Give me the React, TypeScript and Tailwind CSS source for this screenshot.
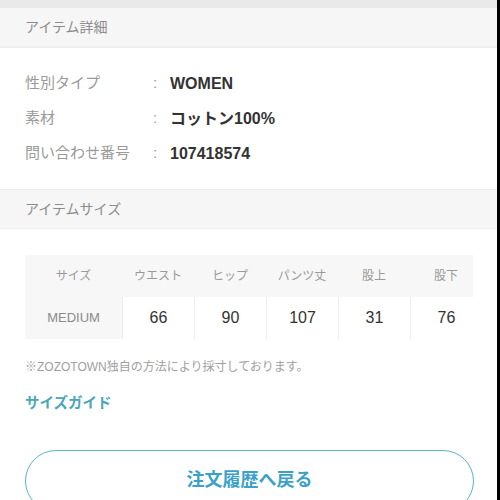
const font = {
  fontFamily: '"Liberation Sans", "Noto Sans CJK JP", sans-serif',
};

export default function App() {
  const details = [
    { label: "性別タイプ", value: "WOMEN" },
    { label: "素材", value: "コットン100%" },
    { label: "問い合わせ番号", value: "107418574" },
  ];

  const columns = ["ウエスト", "ヒップ", "パンツ丈", "股上", "股下"];
  const values = ["66", "90", "107", "31", "76"];

  return (
    <div className="flex h-[500px] w-[500px] overflow-hidden bg-white" style={font}>
      <div className="w-[497px]">
        <div className="h-[8px] bg-[#e9e9e9]" />

        <div className="flex h-[40px] items-center border-b-2 border-[#eeeeee] bg-[#f6f6f6] px-[25px]">
          <p className="text-[14px] text-[#8c8c8c]">アイテム詳細</p>
        </div>

        <div className="pb-[18px] pt-[18px]">
          {details.map((row) => (
            <div key={row.label} className="flex h-[35px] items-center px-[25px]">
              <span className="w-[128px] text-[15px] text-[#9a9a9a]">{row.label}</span>
              <span className="w-[17px] text-[15px] text-[#9a9a9a]">:</span>
              <span className="text-[16px] font-bold text-[#333333]">{row.value}</span>
            </div>
          ))}
        </div>

        <div className="flex h-[40px] items-center border-y border-[#eeeeee] bg-[#f6f6f6] px-[25px]">
          <p className="text-[14px] text-[#8c8c8c]">アイテムサイズ</p>
        </div>

        <div className="px-[25px] pt-[26px]">
          <div className="w-[448px] overflow-hidden bg-[#f7f7f7]">
            <div className="flex w-max">
              <div className="flex w-[97px] flex-col">
                <div className="flex h-[42px] items-center justify-center text-[12px] text-[#9a9a9a]">
                  サイズ
                </div>
                <div className="flex h-[42px] items-center justify-center text-[13px] text-[#8a8a8a]">
                  MEDIUM
                </div>
              </div>
              {columns.map((col, i) => (
                <div key={col} className="flex w-[72px] flex-col">
                  <div className="flex h-[42px] items-center justify-center text-[12px] text-[#9a9a9a]">
                    {col}
                  </div>
                  <div className="flex h-[42px] items-center justify-center border-l border-[#eeeeee] bg-white text-[16px] text-[#333333]">
                    {values[i]}
                  </div>
                </div>
              ))}
            </div>
          </div>

          <p className="mt-[19px] text-[12px] text-[#a0a0a0]">
            ※ZOZOTOWN独自の方法により採寸しております。
          </p>

          <p className="mt-[17px] text-[14.5px] font-bold text-[#4aa6b8]">サイズガイド</p>

          <div className="mt-[35px] flex h-[62px] w-[449px] items-center justify-center rounded-full border-[1.5px] border-[#5ab3c7]">
            <span className="text-[18px] font-bold text-[#3ba1c8]">注文履歴へ戻る</span>
          </div>
        </div>
      </div>
      <div className="w-[3px] shrink-0 bg-black" />
    </div>
  );
}
